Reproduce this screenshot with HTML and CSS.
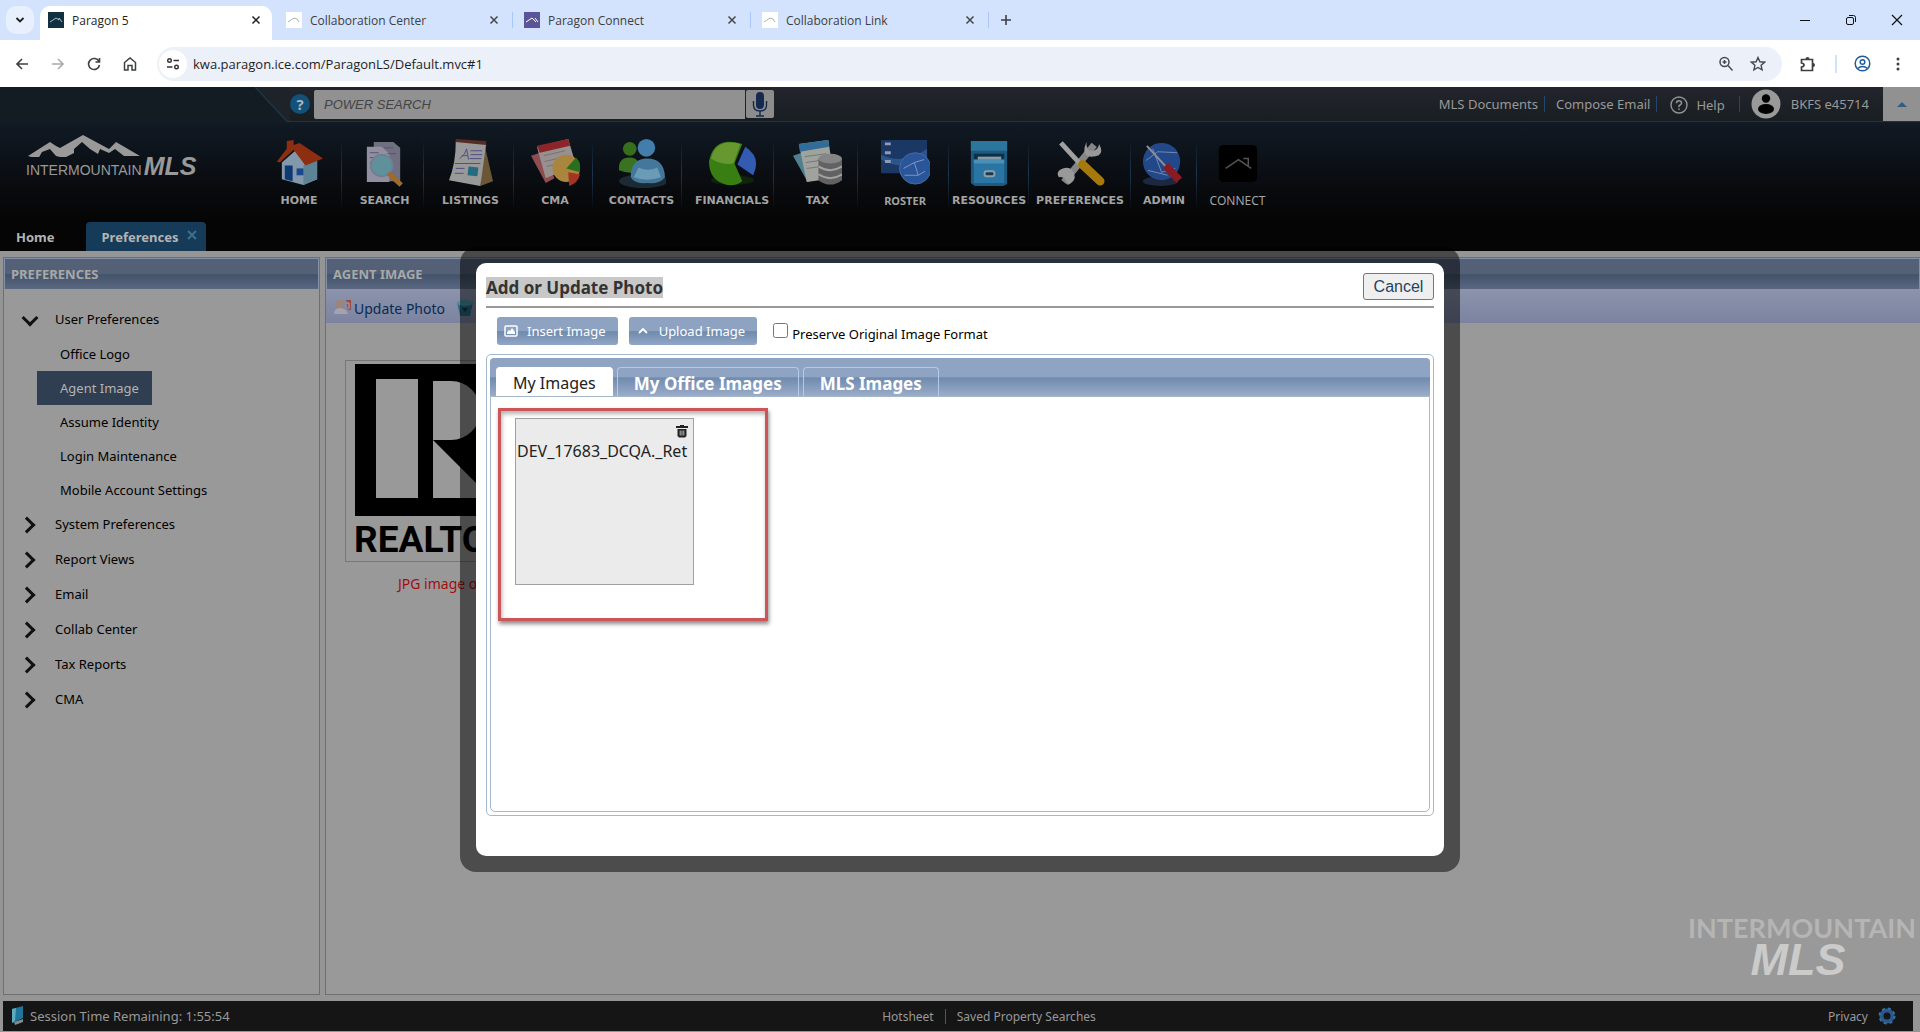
FILE: index.html
```html
<!DOCTYPE html>
<html lang="en">
<head>
<meta charset="utf-8">
<title>Paragon 5</title>
<link rel="stylesheet" href="styles.css">
</head>
<body>
<div class="tabstrip">
  <button class="tab-search" aria-label="Search tabs"><svg width="10" height="10" viewBox="0 0 10 10"><path d="M1.500 3l3.500 3.500L8.500 3" fill="none" stroke="#1f1f1f" stroke-width="1.800"/></svg></button>
  <div class="btab active"><svg class="fav" viewBox="0 0 16 16"><rect width="16" height="16" fill="#12303f"/><path d="M2 10l6-4 3 2V6l3 4" fill="none" stroke="#9fc0c8"/></svg><span>Paragon 5</span><button class="x" aria-label="Close tab"><svg width="10" height="10" viewBox="0 0 10 10"><path d="M1.500 1.500l7 7m0-7l-7 7" stroke="#1f1f1f" stroke-width="1.500"/></svg></button></div>
  <div class="btab"><svg class="fav" viewBox="0 0 16 16"><rect width="16" height="16" fill="#fff"/><path d="M2 10l6-4 3 1 2 3" fill="none" stroke="#a5b5ae"/></svg><span>Collaboration Center</span><button class="x" aria-label="Close tab"><svg width="10" height="10" viewBox="0 0 10 10"><path d="M1.500 1.500l7 7m0-7l-7 7" stroke="#454746" stroke-width="1.500"/></svg></button><i></i></div>
  <div class="btab"><svg class="fav" viewBox="0 0 16 16"><rect width="16" height="16" fill="#5b5499"/><path d="M2 10l6-4 4 4M11 6l3 4" fill="none" stroke="#fff"/></svg><span>Paragon Connect</span><button class="x" aria-label="Close tab"><svg width="10" height="10" viewBox="0 0 10 10"><path d="M1.500 1.500l7 7m0-7l-7 7" stroke="#454746" stroke-width="1.500"/></svg></button><i></i></div>
  <div class="btab"><svg class="fav" viewBox="0 0 16 16"><rect width="16" height="16" fill="#fff"/><path d="M2 10l6-4 3 1 2 3" fill="none" stroke="#a5b5ae"/></svg><span>Collaboration Link</span><button class="x" aria-label="Close tab"><svg width="10" height="10" viewBox="0 0 10 10"><path d="M1.500 1.500l7 7m0-7l-7 7" stroke="#454746" stroke-width="1.500"/></svg></button><i></i></div>
  <button class="newtab" aria-label="New tab"><svg width="12" height="12" viewBox="0 0 12 12"><path d="M6 1v10M1 6h10" stroke="#3c4043" stroke-width="1.600"/></svg></button>
  <div class="winbtns">
    <button aria-label="Minimize"><svg width="12" height="12" viewBox="0 0 12 12"><path d="M1 6.500h10" stroke="#111"/></svg></button>
    <button aria-label="Restore"><svg width="12" height="12" viewBox="0 0 12 12"><rect x="1.500" y="3.500" width="7" height="7" rx="1.500" fill="none" stroke="#111"/><path d="M4 1.500h4.500a2 2 0 0 1 2 2V8" fill="none" stroke="#111"/></svg></button>
    <button aria-label="Close"><svg width="12" height="12" viewBox="0 0 12 12"><path d="M1 1l10 10M11 1L1 11" stroke="#111" stroke-width="1.200"/></svg></button>
  </div>
</div>
<div class="toolbar">
  <button aria-label="Back"><svg width="14" height="14" viewBox="0 0 14 14"><path d="M13 7H2m5-5L2 7l5 5" fill="none" stroke="#3c4043" stroke-width="1.600"/></svg></button>
  <button aria-label="Forward"><svg width="14" height="14" viewBox="0 0 14 14"><path d="M1 7h11M7 2l5 5-5 5" fill="none" stroke="#a9abae" stroke-width="1.600"/></svg></button>
  <button aria-label="Reload"><svg width="14" height="14" viewBox="0 0 14 14"><path d="M12 4.500A5.500 5.500 0 1 0 12.500 8M12.500 1v4h-4" fill="none" stroke="#3c4043" stroke-width="1.600"/></svg></button>
  <button aria-label="Home page"><svg width="14" height="14" viewBox="0 0 14 14"><path d="M1.500 13V5.500L7 1l5.500 4.500V13H9V8.500H5V13z" fill="none" stroke="#3c4043" stroke-width="1.500"/></svg></button>
  <div class="omnibox">
    <button class="siteinfo" aria-label="View site information"><svg width="14" height="14" viewBox="0 0 14 14"><circle cx="3.500" cy="3.500" r="1.800" fill="none" stroke="#333" stroke-width="1.400"/><circle cx="10.500" cy="10" r="1.800" fill="none" stroke="#333" stroke-width="1.400"/><path d="M7.500 3.500h5.500M1 10h5.500" stroke="#333" stroke-width="1.500"/></svg></button>
    <input class="url" aria-label="Address" value="kwa.paragon.ice.com/ParagonLS/Default.mvc#1">
    <button aria-label="Zoom"><svg width="16" height="16" viewBox="0 0 16 16"><circle cx="6.500" cy="6" r="4.500" fill="none" stroke="#45484c" stroke-width="1.500"/><path d="M10 9.500l4.500 5M4.500 6h4M6.500 4v4" stroke="#45484c" stroke-width="1.400"/></svg></button>
    <button aria-label="Bookmark"><svg width="16" height="16" viewBox="0 0 16 16"><path d="M8 1.500l1.900 4.300 4.700.4-3.500 3.100 1 4.600L8 11.500l-4.100 2.400 1-4.600L1.400 6.200l4.700-.4z" fill="none" stroke="#45484c" stroke-width="1.400"/></svg></button>
  </div>
  <button class="ext" aria-label="Extensions"><svg width="18" height="18" viewBox="0 0 18 18"><path d="M2.500 4.500h11v11h-11v-3.500q2.500-.5 2.500-2t-2.500-2z" fill="none" stroke="#3c4043" stroke-width="1.700"/><path d="M6.500 4a2 2 0 0 1 4 0zM14 8a2 2 0 0 1 0 4z" fill="#3c4043"/></svg></button>
  <i class="tsep"></i>
  <button class="prof" aria-label="Profile"><svg width="17" height="17" viewBox="0 0 17 17"><circle cx="8.500" cy="8.500" r="7.300" fill="none" stroke="#1f5c9c" stroke-width="1.500"/><circle cx="8.500" cy="7" r="2.300" fill="none" stroke="#1f5c9c" stroke-width="1.500"/><path d="M3.500 13.500q5-4 10 0" fill="none" stroke="#1f5c9c" stroke-width="1.500"/></svg></button>
  <button class="menu" aria-label="Menu"><svg width="4" height="16" viewBox="0 0 4 16"><circle cx="2" cy="3" r="1.500" fill="#3c4043"/><circle cx="2" cy="8" r="1.500" fill="#3c4043"/><circle cx="2" cy="13" r="1.500" fill="#3c4043"/></svg></button>
</div>

<div class="app">
  <header>
    <div class="topbar">
      <svg class="slant" width="35" height="35" viewBox="0 0 35 35"><path d="M0 0l32 34.500H35V0z" fill="#1e2329"/><path d="M0 0l32 34.500h3" fill="none" stroke="#1d3645" stroke-width="1.500"/></svg>
      <div class="strip">
        <button class="helpdot" aria-label="Search help">?</button>
        <input class="power" placeholder="POWER SEARCH" aria-label="Power search">
        <button class="mic" aria-label="Voice search"><svg width="16" height="26" viewBox="0 0 16 26"><rect x="4" y="1" width="8" height="17" rx="4" fill="#14294d"/><path d="M1.500 10v4q0 6 6.500 6t6.500-6v-4M8 20v5M4 25h8" fill="none" stroke="#14294d" stroke-width="1.400"/></svg></button>
        <nav class="userlinks">
          <a href="#">MLS Documents</a><i></i><a href="#">Compose Email</a><i></i>
          <a href="#" class="help"><svg width="18" height="18" viewBox="0 0 18 18"><circle cx="9" cy="9" r="8" fill="none" stroke="#929292" stroke-width="1.400"/><path d="M6.500 7.200q0-2.500 2.500-2.500t2.500 2.300q0 1.200-1.500 2T9 11.200m0 1.300v1.500" fill="none" stroke="#929292" stroke-width="1.500"/></svg>Help</a><i></i>
          <a href="#" class="user"><svg width="30" height="30" viewBox="0 0 30 30"><circle cx="15" cy="15" r="14.500" fill="#999"/><circle cx="15" cy="9.500" r="4.200" fill="#000"/><ellipse cx="15" cy="20" rx="8" ry="5" fill="#000"/></svg>BKFS e45714</a>
        </nav>
        <button class="collapse" aria-label="Collapse header"><svg width="10" height="5" viewBox="0 0 10 5"><path d="M0 5q4-4 5-5 1 1 5 5z" fill="#345c80"/></svg></button>
      </div>
    </div>
    <div class="brandrow">
      <div class="logo">
        <svg width="116" height="22" viewBox="0 0 116 22"><path d="M2 21L24 7l6 4 4 2L57 0l26 14 7-7 24 14H98l-9-7-6 4-9-4-2 5-8-5-8-7-8 7v4l-10 5-8-2-6-7-8 3-4 7z" fill="#999"/></svg>
        <div class="word"><span>INTERMOUNTAIN</span><b>MLS</b></div>
      </div>
      <nav class="mainnav">
        <a href="#"><svg viewBox="0 0 50 50"><path d="M7 24L23 10l20 12v19L29 47 7 41z" fill="#8498ab"/><path d="M29 27l14-8v22l-14 6z" fill="#5c8396"/><path d="M2 23L12 10V2l7-1v5l6-2L49 20 31 27 19 11 5 24z" fill="#8d2e10"/><path d="M10 27h8v16l-8-2z" fill="#0d3a72"/><path d="M22 30h7v7h-7z" fill="#1a488a"/></svg>HOME</a>
        <a href="#" class="mid"><svg viewBox="0 0 50 50"><path d="M14 3h20l7 6v34H14z" fill="#706f82"/><path d="M7 8h15l8 7v29H7z" fill="#9290a0"/><path d="M10 14h9M10 19h12M10 24h8M25 9h9M28 15h9" stroke="#555569"/><circle cx="22" cy="27" r="11" fill="#5e919c" stroke="#747e91" stroke-width="2"/><path d="M29 35l13 12" stroke="#a16a29" stroke-width="5"/></svg>SEARCH</a>
        <a href="#" class="mid"><svg viewBox="0 0 50 50"><path d="M35 4l5 5 8 34-13 5z" fill="#6b5735"/><path d="M10 2l31 3-6 43L3 42Q10 25 10 2z" fill="#999"/><path d="M10 0l31 2v4L10 3z" fill="#552d24"/><path d="M14 20q6-4 7-10l2 11m-7-4h6M25 12h12M25 16h12M24 20h12M9 25h26M10 30h9M9 35h9" stroke="#4e4d88" fill="none"/><path d="M23 28l10 1-1 9-10-1z" fill="#236b80"/></svg>LISTINGS</a>
        <a href="#" class="mid"><svg viewBox="0 0 50 50"><path d="M0 17l12-4 12 27-9 5z" fill="#8e4d51"/><path d="M6 8l32-8 8 27-31 13z" fill="#97908f"/><path d="M6 7l32-7 2 7-31 7z" fill="#8c2529"/><path d="M13 17l22-5M14 23l21-5M16 28l17-4" stroke="#787274"/><circle cx="36" cy="30" r="14" fill="#aa853d"/><path d="M36 30l10-11q6 6 4 15z" fill="#28701e"/><path d="M38 34l12 2q-2 9-11 12z" fill="#a53425"/></svg>CMA</a>
        <a href="#" class="far"><svg viewBox="0 0 50 50"><ellipse cx="27" cy="43" rx="25" ry="7" fill="#1c2a33"/><circle cx="13" cy="10" r="7" fill="#376e1b"/><path d="M2 32q-1-13 11-13 10 0 11 13-10 5-22 0z" fill="#397322"/><circle cx="30" cy="9" r="9" fill="#437dab"/><path d="M14 39q0-19 17-19t18 19q-5 7-18 6-13 1-17-6z" fill="#43789c"/><path d="M22 29q10 5 19 0l4 10q-15 5-28 0z" fill="#6c9bb7"/></svg>CONTACTS</a>
        <a href="#" class="far"><svg viewBox="0 0 50 50"><ellipse cx="25" cy="42" rx="22" ry="5" fill="#10230c"/><path d="M35 5q-29-9-34 18 0 20 19 24 9 1 15-4L27 25z" fill="#397e13"/><path d="M33 5q-25-6-30 15 10 7 23 5z" fill="#67972f"/><path d="M38 8q17 11 8 29L30 26z" fill="#325bb1"/></svg>FINANCIALS</a>
        <a href="#" class="mid"><svg viewBox="0 0 50 50"><path d="M0 17l12-4 12 27-9 4z" fill="#4f8090"/><path d="M6 5l30-4 6 39-28 4z" fill="#a0a29d"/><path d="M6 5l30-4 1 7-30 5z" fill="#326d9a"/><path d="M12 18l22-3M13 24l21-3M14 30l16-2" stroke="#737772"/><path d="M26 20v22q12 9 24 0V20z" fill="#626262"/><ellipse cx="38" cy="20" rx="12" ry="5" fill="#858585"/><path d="M26 28q12 8 24 0M26 36q12 8 24 0" fill="none" stroke="#a3a3a3" stroke-width="2"/></svg>TAX</a>
        <a href="#" class="mid sans"><svg viewBox="0 0 50 50"><path d="M0 1h47v34H0z" fill="#1b3864"/><path d="M0 16q24 11 47-6v9q-24 15-47 2z" fill="#2d548b"/><path d="M4 5h6M4 14h6M4 23h6" stroke="#8d9bb5" stroke-width="3"/><circle cx="35" cy="30" r="16" fill="#2b559a" stroke="#416fa4"/><path d="M23 30l11-6 10-3M34 24l4 13 7-4M24 37l14 0" fill="none" stroke="#8197bd"/></svg>ROSTER</a>
        <a href="#"><svg viewBox="0 0 50 50"><path d="M6 2h37v44l-4 2H10l-4-3z" fill="#1e5a80"/><path d="M6 2h37v10H6z" fill="#2c759d"/><path d="M9 15h31v7H9z" fill="#0c3048"/><path d="M13 18h24v4H13z" fill="#8a9ca4"/><path d="M9 21h31v24H9z" fill="#2a75a3"/><path d="M9 21h31v4H9z" fill="#4b8fb5"/><rect x="20" y="33" width="10" height="5" rx="2" fill="#1b3a4c" stroke="#8ba1aa" stroke-width="2"/></svg>RESOURCES</a>
        <a href="#"><svg viewBox="0 0 50 50"><path d="M8 44l31-38" stroke="#858585" stroke-width="7"/><path d="M31 3q0 9 5 9 7 0 8-7 7 13-8 13-11 0-5-15zM12 47q-2-9-9-8-4-6 4-9 10-3 12 8 1 5-7 9z" fill="#999"/><path d="M5 4l22 24" stroke="#a0a0a0" stroke-width="5"/><path d="M27 26l18 17" stroke="#a6790d" stroke-width="9" stroke-linecap="round"/></svg>PREFERENCES</a>
        <a href="#"><svg viewBox="0 0 50 50"><ellipse cx="21" cy="43" rx="18" ry="5" fill="#1c2840"/><circle cx="22" cy="23" r="19" fill="#23488a"/><path d="M6 22l12-9 20 1M8 32l20 5M13 10l9 24 14-4" stroke="#7388af" fill="none"/><path d="M7 7l22 24" stroke="#909090" stroke-width="2"/><path d="M26 27l14 15" stroke="#8a1b24" stroke-width="8"/></svg>ADMIN</a>
        <a href="#" class="connect"><svg viewBox="0 0 50 50"><rect x="6" y="6" width="39" height="38" rx="5" fill="#000"/><path d="M13 30l13-9 13 9M31 20h5v7" fill="none" stroke="#555" stroke-width="1.500"/></svg>CONNECT</a>
      </nav>
    </div>
    <nav class="apptabs"><a href="#">Home</a><a href="#" class="on">Preferences <svg width="10" height="10" viewBox="0 0 10 10"><path d="M1 1l8 8m0-8L1 9" stroke="#3f6f91" stroke-width="2"/></svg></a></nav>
  </header>

  <main>
    <aside class="panel side">
      <h2>PREFERENCES</h2>
      <ul class="tree">
        <li class="open"><a href="#">User Preferences</a>
          <ul><li><a href="#">Office Logo</a></li><li><a href="#" class="sel">Agent Image</a></li><li><a href="#">Assume Identity</a></li><li><a href="#">Login Maintenance</a></li><li><a href="#">Mobile Account Settings</a></li></ul>
        </li>
        <li><a href="#">System Preferences</a></li><li><a href="#">Report Views</a></li><li><a href="#">Email</a></li><li><a href="#">Collab Center</a></li><li><a href="#">Tax Reports</a></li><li><a href="#">CMA</a></li>
      </ul>
    </aside>
    <section class="panel content">
      <h2>AGENT IMAGE</h2>
      <div class="actions"><a href="#"><svg width="19" height="18" viewBox="0 0 19 18"><circle cx="6" cy="5" r="4" fill="#a08476"/><path d="M0 15q0-6 6-6t8 6z" fill="#a5a2ad"/><path d="M12 1h5v10h-3z" fill="#984c49"/><path d="M12 4h3v6" stroke="#b6adb5" fill="none"/></svg>Update Photo</a>
      <a href="#" aria-label="Delete photo"><svg width="18" height="18" viewBox="0 0 18 18"><path d="M1 3h16l-3 14H4z" fill="#256b82"/><ellipse cx="9" cy="4" rx="8" ry="3" fill="#4796a7"/><path d="M6 9h6l-3 4z" fill="#0a3e50"/></svg></a></div>
      <figure>
        <div class="photo">
          <svg width="152" height="152" viewBox="0 0 152 152"><path d="M0 0h152v152H0z"/><path d="M21 15h42v119H21zM78 17h18a29 29 0 0 1 0 59H78zM78 76l58 58H78z" fill="#999"/></svg>
          <strong>REALTOR</strong>
        </div>
        <figcaption>JPG image only</figcaption>
      </figure>
      <div class="watermark"><span>INTERMOUNTAIN</span><b>MLS</b></div>
    </section>
  </main>

  <footer>
    <div class="session"><svg width="16" height="20" viewBox="0 0 16 20"><path d="M2 3l11-3v12L2 17z" fill="#20759b"/><path d="M2 3l4-1-1 13-3 2z" fill="#5eaabe"/><path d="M4 16l9-3v3l-8 3z" fill="#7c8d94"/></svg>Session Time Remaining: 1:55:54</div>
    <div class="flinks"><a href="#">Hotsheet</a><i></i><a href="#">Saved Property Searches</a></div>
    <div class="privacy"><a href="#">Privacy</a><svg width="18" height="18" viewBox="0 0 18 18"><circle cx="9" cy="9" r="5.500" fill="none" stroke="#28588c" stroke-width="4"/><circle cx="9" cy="9" r="7.500" fill="none" stroke="#3d6da0" stroke-width="2" stroke-dasharray="3 3"/></svg></div>
  </footer>

  <section class="dialog" role="dialog" aria-labelledby="dlg-title">
    <div class="sheet">
      <div class="dhead"><h1 id="dlg-title">Add or Update Photo</h1><button class="cancel">Cancel</button></div>
      <div class="dtools">
        <button class="blue"><svg width="14" height="12" viewBox="0 0 14 12"><rect x="1" y="1" width="12" height="10" rx="1" fill="none" stroke="#fff" stroke-width="1.500"/><path d="M3 9V7l2-2 1 1 2-3 3 4v2z" fill="#fff"/></svg>Insert Image</button>
        <button class="blue"><svg width="14" height="12" viewBox="0 0 14 12"><path d="M3 8l4-4 4 4" fill="none" stroke="#fff" stroke-width="1.800"/></svg>Upload Image</button>
        <input type="checkbox" id="keep"><label for="keep">Preserve Original Image Format</label>
      </div>
      <div class="tabs">
        <div class="tabbar" role="tablist"><button role="tab" aria-selected="true" class="cur">My Images</button><button role="tab">My Office Images</button><button role="tab">MLS Images</button></div>
        <div class="tabpanel" role="tabpanel">
          <div class="callout">
            <div class="card"><button aria-label="Delete image"><svg width="12" height="13" viewBox="0 0 12 13"><path d="M0 2h12M4 1h4" stroke="#222" stroke-width="1.800"/><path d="M1.500 4h9v7l-1.500 1.500H3L1.500 11z" fill="#222"/><path d="M4.200 5.500v5M6 5.500v5M7.800 5.500v5" stroke="#ddd" stroke-width=".8"/></svg></button><p>DEV_17683_DCQA._Ret</p></div>
          </div>
        </div>
      </div>
    </div>
  </section>
</div>
</body>
</html>
```
FILE: styles.css
```css
* { box-sizing: border-box; }
body { margin: 0; min-height: 100vh; display: flex; flex-direction: column; font-family: "Noto Sans", sans-serif; font-size: 14px; background: #959595; }
button, input { font: inherit; margin: 0; }
button { border: 0; padding: 0; background: none; color: inherit; display: inline-flex; align-items: center; justify-content: center; }
a { color: inherit; text-decoration: none; }
ul, h1, h2, p, figure { margin: 0; padding: 0; list-style: none; }
svg { display: block; flex: none; }

/* Browser frame */
.tabstrip { height: 40px; background: #d3e3fd; display: flex; padding: 6px 0 0 6px; font-family: "Open Sans", sans-serif; font-size: 12px; color: #3c4043; }
.tab-search { width: 28px; height: 28px; border-radius: 10px; background: #e9f0fd; margin-right: 6px; }
.btab { position: relative; width: 238px; display: flex; align-items: center; gap: 8px; padding: 0 17px 6px 8px; }
.btab span { flex: 1; white-space: nowrap; }
.btab.active::before { content: ""; position: absolute; inset: 0 6px 0 0; background: #fff; border-radius: 10px 10px 0 0; }
.btab.active > * { position: relative; }
.btab.active { color: #1f1f1f; }
.fav { width: 16px; height: 16px; }
.btab i { position: absolute; right: 3px; top: 6px; width: 1px; height: 16px; background: #a8c7fa; }
.newtab { width: 28px; height: 28px; }
.winbtns { margin-left: auto; display: flex; }
.winbtns button { width: 46px; height: 28px; }
.toolbar { height: 47px; background: #fff; display: flex; align-items: center; padding: 0 4px; }
.toolbar > button { width: 36px; height: 34px; }
.omnibox { flex: 1; height: 34px; margin: 0 6px 0 9px; background: #ecf0f9; border-radius: 17px; display: flex; align-items: center; padding-right: 8px; }
.omnibox button { width: 32px; height: 28px; }
.omnibox .siteinfo { background: #fff; border-radius: 14px; width: 28px; margin: 0 6px 0 2px; }
.url { flex: 1; border: 0; padding: 0; background: none; outline: 0; color: #1f1f1f; font-family: "Open Sans", sans-serif; font-size: 13px; }
.toolbar > .ext { width: 40px; }
.tsep { width: 2px; height: 18px; background: #d3e3fd; margin: 0 7px; }
.toolbar .prof { width: 36px; }

/* Application header */
.app { position: relative; flex: 1; display: flex; flex-direction: column; }
header { background: linear-gradient(#131b23 34px, #101923 40px, #080a0d 104px, #050505 134px); color: #b4b4b4; }
.topbar { display: flex; padding-left: 255px; }
.strip { flex: 1; height: 35px; background: #1e2329; background-image: linear-gradient(#22262c, #191e23); border-bottom: 1px solid #1d3645; display: flex; align-items: center; }
.helpdot { width: 20px; height: 20px; border-radius: 10px; background: #125179; color: #a9b5bc; font-weight: 700; font-size: 15px; margin-right: 4px; }
.power { width: 431px; height: 29px; border: 0; border-radius: 2px 0 0 2px; background: #919191; padding: 0 10px; font-family: "Liberation Sans", sans-serif; font-style: italic; font-size: 13px; margin-right: 1px; }
.power::placeholder { color: #444; opacity: 1; }
.mic { width: 28px; height: 28px; background: #8c8c8c; border-radius: 2px; }
.userlinks { margin-left: auto; display: flex; align-items: center; font-size: 13px; color: #999; }
.userlinks i { width: 1px; height: 16px; background: #27466b; margin: 0 11px 0 6px; }
.help { display: flex; align-items: center; gap: 8px; margin: 2px 8px 0 2px; }
.user { display: flex; align-items: center; gap: 10px; margin-right: 14px; }
.collapse { width: 37px; height: 34px; background: #919191; }
.brandrow { display: flex; height: 100px; }
.logo { width: 256px; padding: 13px 0 0 26px; color: #999; font-family: "Liberation Sans", sans-serif; }
.word { display: flex; align-items: baseline; gap: 2px; font-size: 14px; line-height: 18px; }
.word b { font-size: 25px; font-style: italic; line-height: 18px; }
.mainnav { display: grid; grid-template-columns: 86px 82px 90px 79px 89px 92px 84px 91px 80px 102px 66px 80px; height: 86px; padding-top: 17px; font-family: "DejaVu Sans", sans-serif; font-weight: 700; font-size: 11px; line-height: 16px; color: #a3a3a3; }
.mainnav a { display: flex; flex-direction: column; align-items: center; gap: 5px; padding-left: 1px; border-right: 1px solid; border-image: linear-gradient(transparent, #1d344e 50%, transparent) 1; }
.mainnav .mid { padding-left: 4px; }
.mainnav .far { padding-left: 9px; }
.mainnav a:last-child { border: 0; }
.mainnav svg { width: 49px; height: 49px; }
.mainnav .sans { font-family: "Noto Sans", sans-serif; }
.mainnav .connect { font-family: "Noto Sans", sans-serif; font-weight: 400; font-size: 12px; }
.apptabs { display: flex; height: 29px; font-weight: 700; font-size: 13px; line-height: 30px; }
.apptabs a { padding: 0 16px; }
.apptabs .on { background: #163b58; border-radius: 4px 4px 0 0; margin-left: 15px; padding: 0 9px 0 16px; display: flex; gap: 9px; }
.apptabs .on svg { margin-top: 8px; }

/* Page body */
main { flex: 1; display: flex; gap: 5px; padding: 6px 0 6px 3px; }
.panel { border: 1px solid #6f6f6f; background: #999; display: flex; flex-direction: column; }
.panel h2 { height: 31px; border: 1px solid #8390aa; border-bottom: 0; background: linear-gradient(#546076 50%, #42536a 52%, #5a6780); color: #a8a8a8; line-height: 30px; padding-left: 6px; font-weight: 700; font-size: 13px; }
.side { width: 317px; }
.content { flex: 1; border-right: 0; }
.tree { padding: 13px 0 0 17px; font-size: 13px; line-height: 35px; color: #000; }
.tree > li > a { display: flex; align-items: center; }
.tree > li > a::before { content: ""; width: 9px; height: 9px; border: solid #111; border-width: 3px 3px 0 0; transform: rotate(45deg); margin: 0 22px 0 0; }
.tree > li.open > a::before { transform: rotate(135deg); margin: 0 19px 4px 3px; }
.tree ul { padding-left: 16px; line-height: 34px; }
.tree ul a { display: inline-block; padding: 0 13px 0 23px; }
.tree ul li { height: 34px; }
.tree .sel { background: #2f3e50; color: #b4b4b4; }
.actions { height: 34px; background: linear-gradient(#8c93ab, #7b83a0); color: #0a2a50; display: flex; align-items: center; gap: 11px; padding: 4px 0 0 8px; }
.actions a { display: flex; align-items: center; gap: 1px; }
figure { margin: 37px 0 0 19px; width: 204px; }
.photo { height: 202px; border: 1px solid #777; padding: 3px 8px; display: flex; flex-direction: column; }
.photo strong { font-family: Roboto, sans-serif; font-size: 37px; line-height: 48px; color: #000; }
.photo svg { margin-left: 1px; }
figcaption { color: #a30d10; padding-left: 53px; margin-top: 12px; line-height: 20px; white-space: nowrap; }
.watermark { margin: auto 4px 15px auto; display: flex; flex-direction: column; align-items: center; font-family: Lato, sans-serif; font-weight: 700; font-size: 27px; line-height: 27px; color: #b5b5b5; }
.watermark b { font-family: "Liberation Sans", sans-serif; font-style: italic; font-size: 45px; line-height: 38px; color: #cbcbcb; padding-right: 8px; }
footer { height: 30px; margin: 0 7px 1px 3px; background: #151515; color: #999; font-size: 13px; display: grid; grid-template-columns: 1fr auto 1fr; align-items: center; }
.session { display: flex; align-items: center; gap: 4px; padding-left: 7px; }
.flinks { display: flex; align-items: center; font-size: 12px; padding-left: 62px; }
.flinks i { width: 1px; height: 15px; background: #555; margin: 0 11px; }
.privacy { display: flex; align-items: center; justify-content: flex-end; gap: 10px; padding-right: 17px; font-size: 12px; }

/* Photo dialog, shown over the page */
.dialog { position: absolute; top: 160px; left: 0; right: 0; margin: 0 auto; width: 1000px; max-width: 96%; padding: 16px; background: rgba(0, 0, 0, .5); border-radius: 16px; }
.sheet { background: #fff; border-radius: 10px; padding: 10px 10px 40px; }
.dhead { display: flex; justify-content: space-between; border-bottom: 2px solid #999; height: 35px; }
h1 { font-size: 17px; line-height: 22px; height: 21px; background: #c8c8c8; color: #333; margin-top: 4px; }
.cancel { width: 71px; height: 27px; border: 1px solid #767676; border-radius: 3px; background: #efefef; color: #1d4468; font-family: "Liberation Sans", sans-serif; font-size: 16px; }
.dtools { display: flex; padding: 9px 0 9px 11px; }
.blue { height: 28px; border-radius: 3px; padding: 0 12px 0 7px; gap: 9px; margin-right: 11px; color: #fff; font-size: 13px; background: linear-gradient(#8ea2c2 50%, #6f8bae 52%, #93a6c6); }
.dtools input { width: 15px; height: 15px; margin: 6px 4px 0 5px; }
.dtools label { font-size: 13px; line-height: 20px; margin-top: 7px; color: #000; }
.tabs { border: 1px solid #a3b8cb; border-radius: 5px; padding: 3px; }
.tabbar { height: 38px; display: flex; align-items: flex-end; padding-left: 6px; border-radius: 4px 4px 0 0; background: linear-gradient(#8fa3c2 50%, #6f8bae 52%, #9bacc9); font-size: 17px; gap: 4px; }
.tabbar button { height: 29px; border: 1px solid #b5c9ea; border-bottom: 0; border-radius: 4px 4px 0 0; padding: 2px 16px 0; color: #fff; font-weight: 700; }
.tabbar .cur { background: #fff; color: #222; font-weight: 400; border-color: #fff; font-size: 16px; }
.tabpanel { border: 1px solid #a3b8cb; border-radius: 0 0 5px 5px; min-height: 416px; padding: 11px 7px; }
.callout { width: 270px; height: 213px; border: 3px solid #cb5557; box-shadow: 1px 3px 4px rgba(0, 0, 0, .45), inset 1px 3px 4px rgba(0, 0, 0, .3); padding: 7px 14px; }
.card { width: 179px; height: 167px; border: 1px solid #a0a0a0; background: #ebebeb; overflow: hidden; font-size: 16px; line-height: 22px; color: #222; padding: 6px 1px; display: flex; flex-direction: column; }
.card button { align-self: flex-end; margin: 0 4px 2px 0; }
```
